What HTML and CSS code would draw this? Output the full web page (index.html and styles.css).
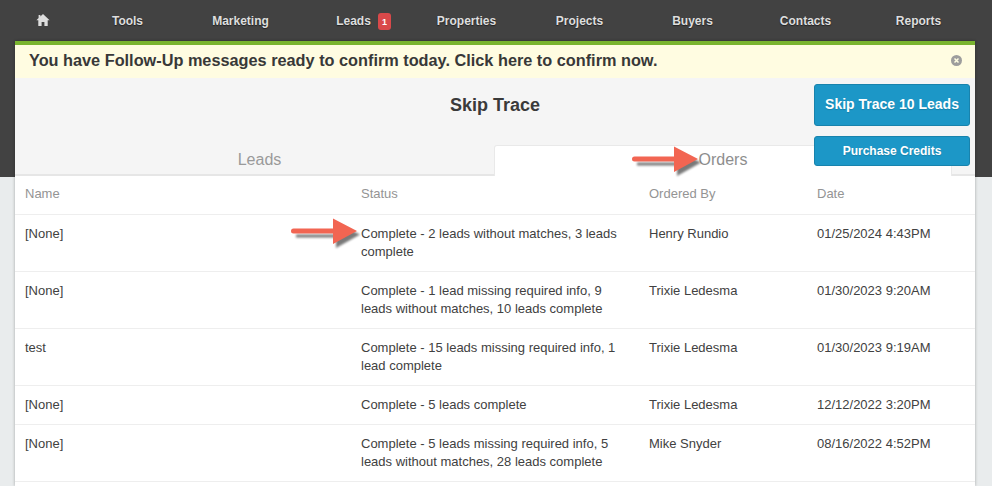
FILE: index.html
```html
<!DOCTYPE html>
<html lang="en">
<head>
<meta charset="utf-8">
<title>Skip Trace</title>
<link rel="stylesheet" href="styles.css">
</head>
<body>
<div class="page">
  <nav class="nav">
    <a class="nav-home"><svg width="14" height="14" viewBox="0 0 14 14"><path class="home-path" d="M7 1 L13.6 7.2 H11.7 V13 H8.4 V9 H5.6 V13 H2.3 V7.2 H0.4 L2.6 5.1 V2 H4.4 V3.4 Z"/></svg></a>
    <a class="nav-item">Tools</a>
    <a class="nav-item">Marketing</a>
    <a class="nav-item nav-leads">Leads<span class="badge">1</span></a>
    <a class="nav-item">Properties</a>
    <a class="nav-item">Projects</a>
    <a class="nav-item">Buyers</a>
    <a class="nav-item">Contacts</a>
    <a class="nav-item">Reports</a>
  </nav>
  <main class="panel">
    <div class="alert">
      <span>You have Follow-Up messages ready to confirm today. Click here to confirm now.</span>
      <svg class="alert-close" width="11" height="11" viewBox="0 0 11 11"><circle cx="5.5" cy="5.5" r="5.5" fill="#9d9d9d"/><path d="M3.5 3.5 L7.5 7.5 M7.5 3.5 L3.5 7.5" stroke="#fffde2" stroke-width="1.5"/></svg>
    </div>
    <header class="head">
      <h1 class="title">Skip Trace</h1>
      <div class="actions">
        <button class="btn btn-lg">Skip Trace 10 Leads</button>
        <button class="btn btn-sm">Purchase Credits</button>
      </div>
      <div class="tabs">
        <a class="tab tab-leads">Leads</a>
        <a class="tab tab-orders">Orders</a>
      </div>
      <svg class="arrow arrow-tab" width="72" height="32" viewBox="0 0 72 32"><path class="arrow-shadow" d="M3 13.5 H43 V2 L67 13.5 L43 27 V16.5 H3 Z" transform="translate(2 3)"/><path class="arrow-fill" d="M2.5 10.5 H42 V0.5 L66 13 L42 26 V15.5 H2.5 A2.5 2.5 0 0 1 2.5 10.5 Z"/></svg>
    </header>
    <div class="table-wrap">
      <svg class="arrow arrow-row" width="72" height="32" viewBox="0 0 72 32"><path class="arrow-shadow" d="M3 13.5 H43 V2 L67 13.5 L43 27 V16.5 H3 Z" transform="translate(2 3)"/><path class="arrow-fill" d="M2.5 10.5 H42 V0.5 L66 13 L42 26 V15.5 H2.5 A2.5 2.5 0 0 1 2.5 10.5 Z"/></svg>
      <table class="orders">
        <thead>
          <tr><th class="c-name">Name</th><th class="c-status">Status</th><th class="c-by">Ordered By</th><th class="c-date">Date</th></tr>
        </thead>
        <tbody>
          <tr><td>[None]</td><td>Complete - 2 leads without matches, 3 leads complete</td><td>Henry Rundio</td><td>01/25/2024 4:43PM</td></tr>
          <tr><td>[None]</td><td>Complete - 1 lead missing required info, 9 leads without matches, 10 leads complete</td><td>Trixie Ledesma</td><td>01/30/2023 9:20AM</td></tr>
          <tr><td>test</td><td>Complete - 15 leads missing required info, 1 lead complete</td><td>Trixie Ledesma</td><td>01/30/2023 9:19AM</td></tr>
          <tr><td>[None]</td><td>Complete - 5 leads complete</td><td>Trixie Ledesma</td><td>12/12/2022 3:20PM</td></tr>
          <tr><td>[None]</td><td>Complete - 5 leads missing required info, 5 leads without matches, 28 leads complete</td><td>Mike Snyder</td><td>08/16/2022 4:52PM</td></tr>
        </tbody>
      </table>
    </div>
  </main>
</div>
</body>
</html>
```
FILE: styles.css
```css
* { box-sizing: border-box; }
html, body { margin: 0; height: 100%; overflow: hidden; }
body {
  font-family: "Liberation Sans", Arial, sans-serif;
  background: linear-gradient(#424242 177px, #e9eced 177px);
}
.page { display: flex; flex-direction: column; height: 100%; padding: 0 17px 0 15px; }

.nav { display: grid; flex: none; grid-template-columns: 56px repeat(8, 113px); height: 41px; }
.nav-home, .nav-item {
  display: flex; align-items: center; justify-content: center;
  color: #dedede; font-size: 12px; font-weight: bold;
  text-shadow: 0 1px 1px #222;
}
.nav-home { padding-bottom: 1px; }
.nav-leads { position: relative; }
.home-path { fill: #dedede; }
.badge {
  position: absolute; left: 81px; top: 13px;
  display: flex; align-items: center; justify-content: center;
  width: 13px; height: 17px; border-radius: 3px;
  background: #d9494a; color: #fff; font-size: 9px; text-shadow: none;
}

.panel { flex: 1; background: #fff; box-shadow: 0 0 3px rgba(0,0,0,.3); }
.alert {
  display: flex; align-items: center; justify-content: space-between;
  height: 37px; padding: 0 13px 3px 14px;
  border-top: 4px solid #7ab42f; background: #fffce1;
  color: #383838; font-size: 16.3px; font-weight: bold;
}
.alert-close { flex: none; }

.head { position: relative; background: #f5f5f5; height: 98px; display: flex; flex-direction: column; }
.title { margin: 0; text-align: center; font-size: 18px; line-height: 20px; padding: 17px 0 0 0; height: 67px; color: #3a3a3a; font-weight: bold; }
.actions { position: absolute; top: 6px; right: 5px; display: flex; flex-direction: column; gap: 10px; width: 156px; }
.btn {
  display: block; width: 100%; padding: 0; border: 1px solid #1883ad; border-radius: 3px;
  background: #1c97c7; color: #fff; font-family: inherit; font-weight: bold;
  text-shadow: 0 1px 1px rgba(0,0,0,.15);
}
.btn-lg { height: 42px; font-size: 14px; padding-bottom: 3px; }
.btn-sm { height: 30px; font-size: 12px; }

.tabs { display: grid; grid-template-columns: 479px 458px; height: 31px; border-bottom: 2px solid #e6e6e6; }
.tab { display: flex; align-items: center; justify-content: center; font-size: 16px; color: #9a9a9a; padding-bottom: 2px; }
.tab-leads { padding-left: 10px; }
.tab-orders { background: #fff; border: 1px solid #e9e9e9; border-bottom: 0; border-radius: 3px 3px 0 0; height: 31px; color: #8e8e8e; }

.arrow { position: absolute; overflow: visible; }
.arrow-tab { left: 617px; top: 68px; }
.arrow-row { left: 276px; top: 42px; }
.arrow-fill { fill: #f26552; }
.arrow-shadow { fill: #333; opacity: .65; filter: blur(1.2px); }

.table-wrap { position: relative; }
.orders { width: 100%; border-collapse: collapse; table-layout: fixed; font-size: 13px; line-height: 18px; color: #414141; }
.orders th, .orders td { padding: 10px 10px 10px; vertical-align: top; text-align: left; border-bottom: 1px solid #eeeeee; }
.orders th { font-weight: normal; color: #949494; padding: 9px 10px 10.5px; }
.orders td:nth-child(2) { padding-right: 16px; }
.c-name { width: 336px; }
.c-status { width: 288px; }
.c-by { width: 168px; }
```
